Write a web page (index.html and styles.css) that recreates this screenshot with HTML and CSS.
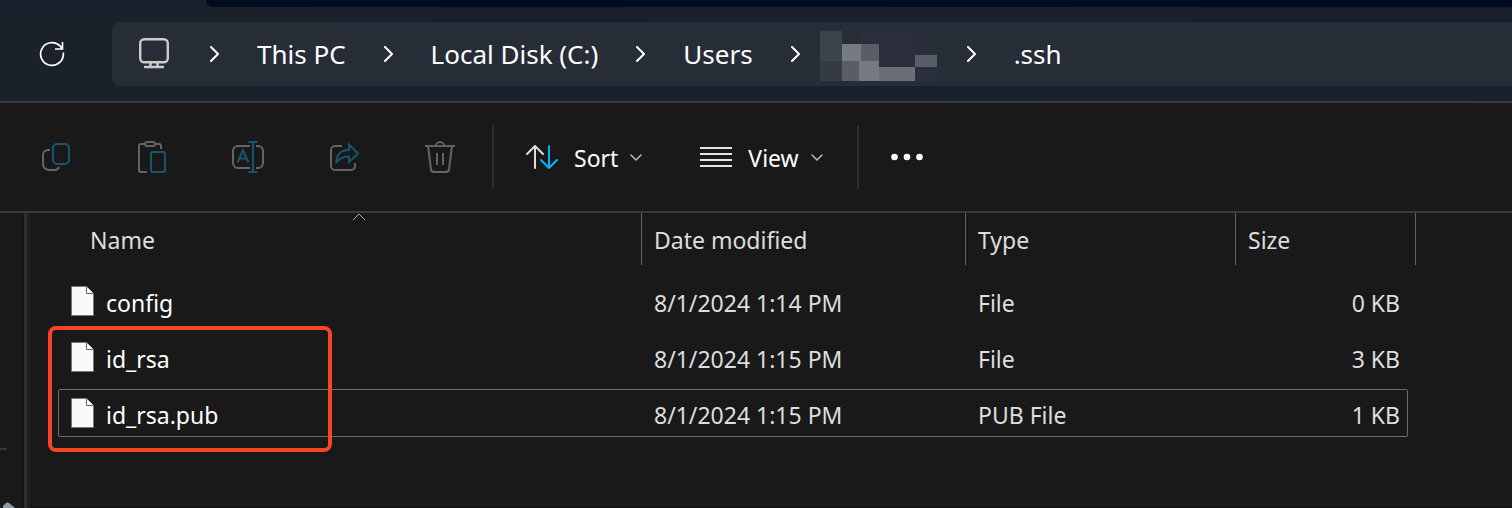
FILE: index.html
```html
<!DOCTYPE html>
<html lang="en">
<head>
<meta charset="utf-8">
<title>.ssh</title>
<link rel="stylesheet" href="styles.css">
</head>
<body>
<svg class="sprite" aria-hidden="true">
  <symbol id="chevron-right" viewBox="0 0 10 16"><path d="M1 1l7 7-7 7" fill="none" stroke="#fff" stroke-width="2" stroke-linecap="round" stroke-linejoin="round"/></symbol>
  <symbol id="chevron-down" viewBox="0 0 12 8"><path d="M1 2l5 5 5-5" fill="none" stroke="#b8b8b8" stroke-width="1.500" stroke-linecap="round" stroke-linejoin="round"/></symbol>
  <symbol id="file" viewBox="0 0 24 32"><path d="M.5 1.500h15l7 7v22H.5z" fill="#fafafa" stroke="#777"/><path d="M15.500 1.500v7h7" fill="#fff" stroke="#666"/></symbol>
</svg>

<div class="tab-strip"></div>

<header class="nav">
  <button class="refresh" aria-label="Refresh">
    <svg width="32" height="32" viewBox="0 0 32 32" fill="none" stroke="#fff" stroke-width="1.700"><path d="M27.300 14.500a11.400 11.400 0 1 1-3.300-6.600l2.500 3M26.500 4v7H19"/></svg>
  </button>
  <nav class="address" aria-label="Path">
    <button class="crumb device" aria-label="Devices">
      <svg width="32" height="32" viewBox="0 0 32 32" fill="none" stroke="#ccc" stroke-width="2.400"><rect x="2.200" y="1.200" width="27.600" height="23" rx="4"/><path d="M12.500 24v5M19.500 24v5M7 29h18" stroke-linecap="round"/></svg>
    </button>
    <svg class="sep"><use href="#chevron-right"/></svg>
    <button class="crumb">This PC</button>
    <svg class="sep"><use href="#chevron-right"/></svg>
    <button class="crumb">Local Disk (C:)</button>
    <svg class="sep"><use href="#chevron-right"/></svg>
    <button class="crumb">Users</button>
    <svg class="sep"><use href="#chevron-right"/></svg>
    <button class="crumb user" aria-label="User folder">
      <svg width="117" height="50" viewBox="0 0 117 50" shape-rendering="crispEdges">
        <path fill="#2a2f3b" d="M41 0h76v50H41z"/><path fill="#282d38" d="M95 0h22v24H95z"/>
        <path fill="#3d434d" d="M0 0h22v30H0z"/><path fill="#353b45" d="M0 30h22v20H0z"/>
        <path fill="#767a81" d="M22 13h19v17H22z"/><path fill="#5a5d65" d="M41 13h18v17H41zM22 30h17v20H22z"/>
        <path fill="#757982" d="M39 30h20v20H39z"/><path fill="#6a6e76" d="M59 36h36v14H59z"/>
        <path fill="#575e69" d="M95 24h22v12H95z"/>
      </svg>
    </button>
    <svg class="sep"><use href="#chevron-right"/></svg>
    <button class="crumb">.ssh</button>
  </nav>
</header>

<div class="toolbar" role="toolbar" aria-label="Commands">
  <button class="tool" aria-label="Copy" disabled>
    <svg class="icon" viewBox="0 0 32 32"><path class="grey" d="M10 9H8a5 5 0 0 0-5 5v9a6 6 0 0 0 6 6h6a5 5 0 0 0 4-3"/><rect class="blue" x="13" y="3" width="16" height="20" rx="4"/></svg>
  </button>
  <button class="tool" aria-label="Paste" disabled>
    <svg class="icon" viewBox="0 0 32 32"><path class="grey" d="M9 3H5a2 2 0 0 0-2 2v24a2 2 0 0 0 2 2h6M19 3h4a2 2 0 0 1 2 2v3"/><rect class="grey" x="9" y="1" width="10" height="4" rx="2"/><rect class="blue" x="15" y="11" width="14" height="20" rx="2"/></svg>
  </button>
  <button class="tool" aria-label="Rename" disabled>
    <svg class="icon" viewBox="0 0 32 32"><path class="grey" d="M18 5H6a5 5 0 0 0-5 5v12a5 5 0 0 0 5 5h12M24 5h2a5 5 0 0 1 5 5v12a5 5 0 0 1-5 5h-2"/><path class="blue" d="M21 1v30M16.500 1h9M16.500 31h9M5.500 21.500L11 9.500l5.500 12M7.500 17.500h7"/></svg>
  </button>
  <button class="tool" aria-label="Share" disabled>
    <svg class="icon" viewBox="0 0 32 32"><path class="grey" d="M14 5H7a4 4 0 0 0-4 4v16a4 4 0 0 0 4 4h16a4 4 0 0 0 4-4v-3"/><path class="blue" d="M21 3.500l9 9-9 8.500v-5.500c-6 0-9 1.500-12.500 5.500C8.500 13.500 13 9 21 9z"/></svg>
  </button>
  <button class="tool" aria-label="Delete" disabled>
    <svg class="icon" viewBox="0 0 32 32"><path class="grey" d="M1 5h30M12 5a4 4 0 0 1 8 0M4 5l3 23.500a3 3 0 0 0 3 2.500h12a3 3 0 0 0 3-2.500L28 5M13 12v12M19 12v12"/></svg>
  </button>
  <div class="divider"></div>
  <button class="menu">
    <svg class="icon" viewBox="0 0 32 32" stroke-width="2" stroke-linecap="round" stroke-linejoin="round"><path stroke="#ddd" d="M9 27V5M1 13l8-8 8 8"/><path stroke="#00b7f5" d="M23 5v22M15 19l8 8 8-8"/></svg>
    <span>Sort</span>
    <svg class="caret"><use href="#chevron-down"/></svg>
  </button>
  <button class="menu">
    <svg class="icon" viewBox="0 0 32 32"><path stroke="#e4e4e4" stroke-width="2" d="M0 7h32M0 13h32M0 19h32M0 25h32"/></svg>
    <span>View</span>
    <svg class="caret"><use href="#chevron-down"/></svg>
  </button>
  <div class="divider"></div>
  <button class="more" aria-label="See more">
    <svg class="icon" viewBox="0 0 32 32" fill="#fff"><circle cx="3.500" cy="16" r="3.300"/><circle cx="16" cy="16" r="3.300"/><circle cx="28.500" cy="16" r="3.300"/></svg>
  </button>
</div>

<div class="body">
  <aside class="sidebar">
    <hr class="side-line">
    <svg class="pin" width="12" height="6" viewBox="0 0 12 6"><path d="M0 6V4l3-3q1.500-1 3 0l6 5z" fill="#8e9aa3"/></svg>
  </aside>
  <div class="splitter"></div>
  <main class="files">
    <table>
      <colgroup><col class="c-name"><col class="c-date"><col class="c-type"><col class="c-size"></colgroup>
      <thead>
        <tr>
          <th class="name" aria-sort="ascending">Name
            <svg class="sorted" width="14" height="8" viewBox="0 0 14 8"><path d="M1 7l6-6 6 6" fill="none" stroke="#aaa"/></svg>
          </th>
          <th>Date modified</th><th>Type</th><th>Size</th>
        </tr>
      </thead>
      <tbody>
        <tr><td class="name"><span class="file"><svg class="doc"><use href="#file"/></svg><span class="label">config</span></span></td><td>8/1/2024 1:14 PM</td><td>File</td><td class="size">0 KB</td></tr>
        <tr><td class="name"><span class="file"><svg class="doc"><use href="#file"/></svg><span class="label">id_rsa</span></span></td><td>8/1/2024 1:15 PM</td><td>File</td><td class="size">3 KB</td></tr>
        <tr class="focused"><td class="name"><span class="file"><svg class="doc"><use href="#file"/></svg><span class="label">id_rsa.pub</span></span></td><td>8/1/2024 1:15 PM</td><td>PUB File</td><td class="size">1 KB</td></tr>
      </tbody>
    </table>
    <div class="highlight"></div>
  </main>
</div>
</body>
</html>
```

FILE: styles.css
```css
* { box-sizing: border-box; }

body {
  margin: 0;
  min-height: 100vh;
  display: flex;
  flex-direction: column;
  background: #191919;
  color: #fff;
  font: 23px/32px "Noto Sans", "Open Sans", sans-serif;
  overflow-x: hidden;
}

button {
  margin: 0;
  padding: 0;
  border: 0;
  background: none;
  color: inherit;
  font: inherit;
  white-space: nowrap;
}

svg { display: block; flex: none; }
.sprite { position: absolute; width: 0; height: 0; }

.tab-strip {
  height: 7px;
  padding-left: 206px;
  background: #1a202b;
}
.tab-strip::before {
  content: "";
  display: block;
  height: 7px;
  background: #000b1e;
  border-bottom-left-radius: 7px;
}

.nav {
  display: flex;
  align-items: center;
  gap: 44px;
  padding: 15px 0 15px 36px;
  background: linear-gradient(90deg, #1a212b, #1a1f2c);
  border-bottom: 2px solid #3a3a3b;
}
.address {
  flex: 1;
  display: flex;
  align-items: center;
  height: 64px;
  padding-left: 26px;
  background: #272d37;
  border-radius: 8px 0 0 8px;
  font-size: 26px;
}
.sep { width: 10px; height: 16px; margin: 0 37px 0 38px; }
.device + .sep { margin-left: 40px; }
.user { margin: 4px -8px 0 -18px; }

.toolbar {
  display: flex;
  align-items: center;
  height: 110px;
  padding-left: 8px;
  border-bottom: 2px solid #3a3a3a;
}
.icon { width: 32px; height: 32px; fill: none; }
.more .icon { fill: #fff; }
.tool { width: 96px; display: flex; justify-content: center; }
.grey { stroke: #646464; stroke-width: 2; }
.blue { stroke: #17566e; stroke-width: 2; }
.divider { width: 2px; height: 64px; margin: 0 0 0 4px; background: #2c2c2c; }
.menu { display: flex; align-items: center; padding-left: 32px; margin-right: 26px; }
.menu span { margin: 2px 12px 0 16px; }
.menu + .divider { margin-left: 8px; }
.caret { width: 12px; height: 8px; }
.more { padding-left: 32px; }

.body { flex: 1; display: flex; }
.sidebar {
  width: 24px;
  display: flex;
  flex-direction: column;
  border-right: 2px solid #151515;
}
.side-line { width: 7px; height: 2px; margin: 235px 0 0; border: 0; background: #353535; }
.pin { margin: auto 0 0 3px; }
.splitter { width: 6px; background: linear-gradient(90deg, #2e2e2e 3px, #1f1f1f 3px); }
.files { flex: 1; position: relative; border-bottom: 1px solid #160d10; }

table { width: 1386px; table-layout: fixed; border-collapse: separate; border-spacing: 0; }
.c-name { width: 612px; }
.c-date { width: 324px; }
.c-type { width: 270px; }
.c-size { width: 180px; }
th {
  position: relative;
  height: 52px;
  padding: 2px 0 0 12px;
  border-right: 1px solid #636363;
  color: #dedede;
  font-weight: 400;
  text-align: left;
}
th.name { padding-left: 60px; }
.sorted { position: absolute; top: 0; left: 322px; }
td { height: 56px; padding: 4px 0 0 12px; color: #dedede; white-space: nowrap; }
td.name { padding: 0 0 0 41px; color: #fff; }
tbody::before { content: ""; display: block; height: 8px; }
.file { display: flex; align-items: center; gap: 11px; }
.label { padding-top: 4px; }
.doc { width: 24px; height: 32px; margin-bottom: 4px; margin-top: 4px; }
td.size { padding-right: 16px; text-align: right; }
.focused { position: relative; }
.focused::after {
  content: "";
  position: absolute;
  inset: 4px 8px 4px 28px;
  border: 1px solid #6b6b6b;
  border-radius: 2px;
}

.highlight {
  position: absolute;
  top: 113px;
  left: 18px;
  width: 284px;
  height: 126px;
  border: 4px solid #f74625;
  border-radius: 8px;
}
```
